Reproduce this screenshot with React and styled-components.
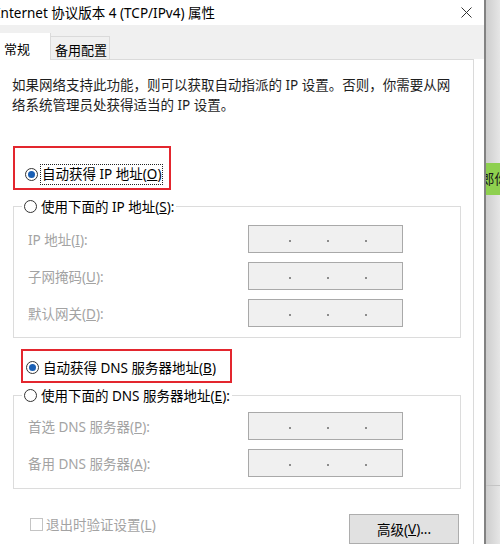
import React from "react"
import styled, { createGlobalStyle, css } from "styled-components"

const GlobalStyle = createGlobalStyle`
    html, body {
        margin: 0;
        padding: 0;
    }
    body {
        width: 500px;
        height: 544px;
        overflow: hidden;
        background: #fff;
        font-family: "Noto Sans", "Noto Sans CJK SC", sans-serif;
        font-size: 13.5px;
        color: #000;
    }
`

const Screen = styled.div`
    display: flex;
    width: 500px;
    height: 544px;
    overflow: hidden;
`

const Dialog = styled.div`
    width: 484px;
    flex-shrink: 0;
    display: flex;
    flex-direction: column;
    background: #fff;
`

const TitleBar = styled.div`
    height: 27px;
    display: flex;
    align-items: center;
    justify-content: space-between;
    padding-right: 12px;
    overflow: hidden;
`

const Title = styled.div`
    margin-left: -4px;
    line-height: 24px;
    white-space: nowrap;
`

const TabStrip = styled.div`
    height: 36px;
    background: #f0f0f0;
    display: flex;
    align-items: flex-end;
`

const Tab = styled.div`
    box-sizing: border-box;
    white-space: nowrap;
    font-size: 13px;
    ${(p) =>
        p.$active
            ? css`
                  width: 51px;
                  height: 27px;
                  margin-bottom: -1px;
                  padding: 5px 0 0 4px;
                  line-height: 22px;
                  background: #fff;
                  border-right: 1px solid #dadada;
                  position: relative;
                  z-index: 1;
              `
            : css`
                  width: 59px;
                  height: 23px;
                  padding: 4px 0 0 4px;
                  line-height: 19px;
                  background: #f0f0f0;
                  border: 1px solid #dadada;
                  border-bottom: none;
                  border-left: none;
              `}
`

const Panel = styled.div`
    flex: 1;
    margin-right: 10px;
    border-top: 1px solid #dadada;
    border-right: 1px solid #dadada;
    display: flex;
    flex-direction: column;
`

const Desc = styled.p`
    margin: 15px 0 0 12px;
    line-height: 20px;
    color: #1e1e1e;
    white-space: nowrap;
`

const RedFrame = styled.div`
    box-sizing: border-box;
    width: ${(p) => p.$width}px;
    margin: ${(p) => p.$top}px 0 0 ${(p) => p.$left}px;
    padding: ${(p) => p.$pad};
    border: 2px solid #e3262e;
`

const RadioRow = styled.div`
    display: flex;
    align-items: center;
    gap: ${(p) => p.$gap || 4}px;
    height: 24px;
    white-space: nowrap;
`

const RadioDot = styled.span`
    width: 13px;
    height: 13px;
    box-sizing: border-box;
    border: 1px solid #333;
    border-radius: 50%;
    background: #fff;
    display: flex;
    align-items: center;
    justify-content: center;
    &::after {
        content: "";
        width: 7px;
        height: 7px;
        border-radius: 50%;
        background: #1a5fb4;
        display: ${(p) => (p.$checked ? "block" : "none")};
    }
`

const FocusText = styled.span`
    border: 1px dotted #222;
    padding: 0 1px;
    line-height: 19px;
`

const Group = styled.fieldset`
    box-sizing: border-box;
    width: 448px;
    min-width: 0;
    margin: ${(p) => p.$top}px 0 0 13px;
    padding: 0;
    border: 1px solid #dcdcdc;
`

const Legend = styled.legend`
    margin-left: 8px;
    padding: 0 2px;
`

const Fields = styled.div`
    display: grid;
    grid-template-columns: 220px 155px;
    row-gap: 9px;
    align-items: center;
    padding: ${(p) => p.$pt}px 0 ${(p) => p.$pb}px 14px;
`

const FieldLabel = styled.span`
    color: #a3a3a3;
    white-space: nowrap;
`

const IpBox = styled.div`
    height: 28px;
    box-sizing: border-box;
    border: 1px solid #a9a9a9;
    background: #f0f0f0;
    display: flex;
    align-items: center;
    gap: 36px;
    padding: 3px 0 0 40px;
`

const Dot = styled.span`
    width: 2px;
    height: 2px;
    background: #8c8c8c;
`

const Footer = styled.div`
    display: flex;
    justify-content: space-between;
    align-items: flex-start;
    margin-top: 25px;
    padding: 0 14px 0 30px;
`

const CheckRow = styled.div`
    display: flex;
    align-items: center;
    gap: 3px;
    height: 20px;
    color: #a3a3a3;
    white-space: nowrap;
`

const CheckBox = styled.span`
    width: 13px;
    height: 13px;
    box-sizing: border-box;
    border: 1px solid #c4c4c4;
    background: #fff;
`

const Button = styled.div`
    width: 110px;
    height: 30px;
    box-sizing: border-box;
    border: 1px solid #adadad;
    background: #e1e1e1;
    display: flex;
    align-items: center;
    justify-content: center;
    white-space: nowrap;
`

const Divider = styled.div`
    width: 2px;
    flex-shrink: 0;
    background: #828282;
`

const Side = styled.div`
    flex: 1;
    display: flex;
    flex-direction: column;
    overflow: hidden;
    background: linear-gradient(to right, #cdcdcd, #e6e6e6);
`

const GreenTag = styled.div`
    margin-top: 163px;
    height: 32px;
    line-height: 32px;
    background: #8ed04f;
    color: #1a1a1a;
    white-space: nowrap;
    text-indent: -5px;
`

const SideRule = styled.div`
    margin-top: 290px;
    border-top: 1px solid #c4c4c4;
`

function CloseIcon() {
    return (
        <svg width="11" height="11" viewBox="0 0 11 11">
            <path d="M0.5 0.5 L10.5 10.5 M10.5 0.5 L0.5 10.5" stroke="#333" strokeWidth="1" fill="none" />
        </svg>
    )
}

function IpField() {
    return (
        <IpBox>
            <Dot />
            <Dot />
            <Dot />
        </IpBox>
    )
}

function FieldRows({ rows, pt, pb }) {
    return (
        <Fields $pt={pt} $pb={pb}>
            {rows.map(([label, key]) => (
                <React.Fragment key={key}>
                    <FieldLabel>
                        {label}(<u>{key}</u>):
                    </FieldLabel>
                    <IpField />
                </React.Fragment>
            ))}
        </Fields>
    )
}

export default function App() {
    return (
        <>
            <GlobalStyle />
            <Screen>
                <Dialog>
                    <TitleBar>
                        <Title>Internet 协议版本 4 (TCP/IPv4) 属性</Title>
                        <CloseIcon />
                    </TitleBar>
                    <TabStrip>
                        <Tab $active>常规</Tab>
                        <Tab>备用配置</Tab>
                    </TabStrip>
                    <Panel>
                        <Desc>
                            如果网络支持此功能，则可以获取自动指派的 IP 设置。否则，你需要从网
                            <br />
                            络系统管理员处获得适当的 IP 设置。
                        </Desc>

                        <RedFrame $width={158} $top={31} $left={13} $pad="14px 0 2px 10px">
                            <RadioRow $gap={2}>
                                <RadioDot $checked />
                                <FocusText>
                                    自动获得 IP 地址(<u>O</u>)
                                </FocusText>
                            </RadioRow>
                        </RedFrame>

                        <Group $top={4}>
                            <Legend>
                                <RadioRow>
                                    <RadioDot />
                                    <span>
                                        使用下面的 IP 地址(<u>S</u>):
                                    </span>
                                </RadioRow>
                            </Legend>
                            <FieldRows
                                pt={7}
                                pb={10}
                                rows={[
                                    ["IP 地址", "I"],
                                    ["子网掩码", "U"],
                                    ["默认网关", "D"],
                                ]}
                            />
                        </Group>

                        <RedFrame $width={211} $top={11} $left={21} $pad="4px 0 2px 3px">
                            <RadioRow>
                                <RadioDot $checked />
                                <span>
                                    自动获得 DNS 服务器地址(<u>B</u>)
                                </span>
                            </RadioRow>
                        </RedFrame>

                        <Group $top={0}>
                            <Legend>
                                <RadioRow>
                                    <RadioDot />
                                    <span>
                                        使用下面的 DNS 服务器地址(<u>E</u>):
                                    </span>
                                </RadioRow>
                            </Legend>
                            <FieldRows
                                pt={5}
                                pb={11}
                                rows={[
                                    ["首选 DNS 服务器", "P"],
                                    ["备用 DNS 服务器", "A"],
                                ]}
                            />
                        </Group>

                        <Footer>
                            <CheckRow>
                                <CheckBox />
                                <span>
                                    退出时验证设置(<u>L</u>)
                                </span>
                            </CheckRow>
                            <Button>
                                高级(<u>V</u>)...
                            </Button>
                        </Footer>
                    </Panel>
                </Dialog>
                <Divider />
                <Side>
                    <GreenTag>郎你</GreenTag>
                    <SideRule />
                </Side>
            </Screen>
        </>
    )
}
